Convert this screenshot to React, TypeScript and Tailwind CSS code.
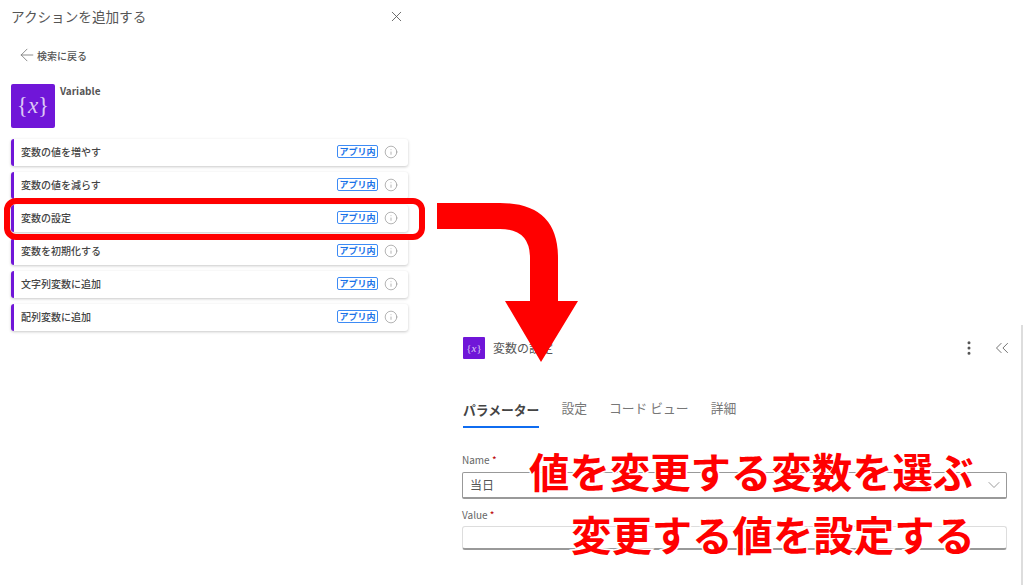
import React from 'react';
import { X, ArrowLeft, ChevronDown, ChevronsLeft, EllipsisVertical, Info } from 'lucide-react';

const ACTIONS = ['変数の値を増やす', '変数の値を減らす', '変数の設定', '変数を初期化する', '文字列変数に追加', '配列変数に追加'];
const TABS = ['設定', 'コード ビュー', '詳細'];

const ActionRow: React.FC<{ label: string }> = ({ label }) => (
    <div className="flex h-[27px] items-center rounded-[3px] border-l-[3px] border-[#7016d8] bg-white pb-[2px] pl-[7px] pr-[10px] shadow-[0_1px_3px_rgba(0,0,0,0.22)]">
        <span className="flex-1 text-[10px] font-medium text-[#444]">{label}</span>
        <span className="flex h-[13px] w-[41px] items-center justify-center rounded-[2px] border border-[#3d8bf5] text-[9px] font-bold text-[#1a73e8]">アプリ内</span>
        <Info className="ml-[6px] h-[14px] w-[14px] text-[#8a8a8a]" strokeWidth={1.1} />
    </div>
);

export default function App() {
    return (
        <div className="relative flex h-[585px] w-[1024px] overflow-hidden bg-white font-['Noto_Sans_CJK_JP','Noto_Sans',sans-serif]">
            {/* left panel */}
            <div className="w-[450px] shrink-0 pl-[11px] pr-[42px]">
                <div className="flex h-[32px] items-center justify-between pr-[3px]">
                    <span className="text-[13.6px] text-[#555]">アクションを追加する</span>
                    <X className="h-[17px] w-[17px] text-[#555]" strokeWidth={1.2} />
                </div>
                <div className="mt-[14px] flex h-[18px] items-center pl-[6px] text-[10px] font-medium text-[#555]">
                    <ArrowLeft className="h-[20px] w-[20px] text-[#777]" strokeWidth={1} />
                    <span>検索に戻る</span>
                </div>
                <div className="mt-[20px] flex">
                    <div className="flex h-[44px] w-[44px] items-center justify-center rounded-[2px] bg-[#7016d8] font-['Liberation_Serif',serif] text-[23px] text-[#ddc8f5]">
                        {'{'}<span className="italic">x</span>{'}'}
                    </div>
                    <span className="ml-[5px] text-[10px] font-semibold leading-[14px] text-[#555]">Variable</span>
                </div>
                <div className="mt-[11px] flex flex-col gap-[6px]">
                    {ACTIONS.map((action) => (
                        <ActionRow key={action} label={action} />
                    ))}
                </div>
            </div>

            {/* right panel */}
            <div className="flex-1 pl-[12px] pr-[1px] pt-[325px]">
                <div className="h-full border-r-[2px] border-[#ddd] pr-[14px] pt-[12px]">
                    <div className="flex h-[22px] items-center">
                        <div className="ml-px flex h-[22px] w-[22px] items-center justify-center rounded-[1px] bg-[#7016d8] font-['Liberation_Serif',serif] text-[11px] text-[#ddc8f5]">
                            {'{'}<span className="italic">x</span>{'}'}
                        </div>
                        <span className="ml-[8px] flex-1 text-[12px] text-[#555]">変数の設定</span>
                        <EllipsisVertical className="h-[18px] w-[18px] text-[#555]" strokeWidth={2} />
                        <ChevronsLeft className="-mr-[6px] ml-[13px] h-[22px] w-[22px] text-[#666]" strokeWidth={1} />
                    </div>
                    <div className="mt-[40px] flex items-start gap-[22px] pl-[1px]">
                        <div className="border-b-[2px] border-[#0f6cf0] pb-[7px] leading-[18px]">
                            <span className="text-[12.8px] font-bold leading-[18px] text-[#444]">パラメーター</span>
                        </div>
                        {TABS.map((tab) => (
                            <span key={tab} className="text-[12.8px] leading-[18px] text-[#777]">{tab}</span>
                        ))}
                    </div>
                    <div className="mt-[25px] text-[10px] leading-[14px] text-[#666]">
                        Name <span className="text-[#b00]">*</span>
                    </div>
                    <div className="mt-[5px] flex h-[27px] items-center justify-between rounded-[2px] border border-b-[2px] border-[#999] pl-[7px] pr-[2px] text-[12px] text-[#555]">
                        <span>当日</span>
                        <ChevronDown className="h-[20px] w-[20px] text-[#888]" strokeWidth={1} />
                    </div>
                    <div className="mt-[9px] text-[10px] leading-[14px] text-[#666]">
                        Value <span className="text-[#b00]">*</span>
                    </div>
                    <div className="mt-[4px] h-[24px] rounded-[3px] border border-b-[2px] border-[#ddd] border-b-[#999]" />
                </div>
            </div>

            {/* annotations laid over the screenshot */}
            <div className="absolute left-[4px] top-[198px] h-[42px] w-[421px] rounded-[12px] border-[6px] border-[#ff0000]" />
            <svg className="absolute left-0 top-0" width="1024" height="585" viewBox="0 0 1024 585">
                <path d="M437 203 H500 Q558 203 558 258 V301 H578 L541 362 L505 301 H530 V258 Q530 229 500 229 H437 Z" fill="#ff0000" />
            </svg>
            <div className="absolute left-[529px] top-[446px] whitespace-nowrap text-[40.4px] font-bold leading-[50px] text-[#ff0000] [-webkit-text-stroke:3px_white] [paint-order:stroke_fill]">値を変更する変数を選ぶ</div>
            <div className="absolute left-[571px] top-[509px] whitespace-nowrap text-[40.4px] font-bold leading-[50px] text-[#ff0000] [-webkit-text-stroke:3px_white] [paint-order:stroke_fill]">変更する値を設定する</div>
        </div>
    );
}
